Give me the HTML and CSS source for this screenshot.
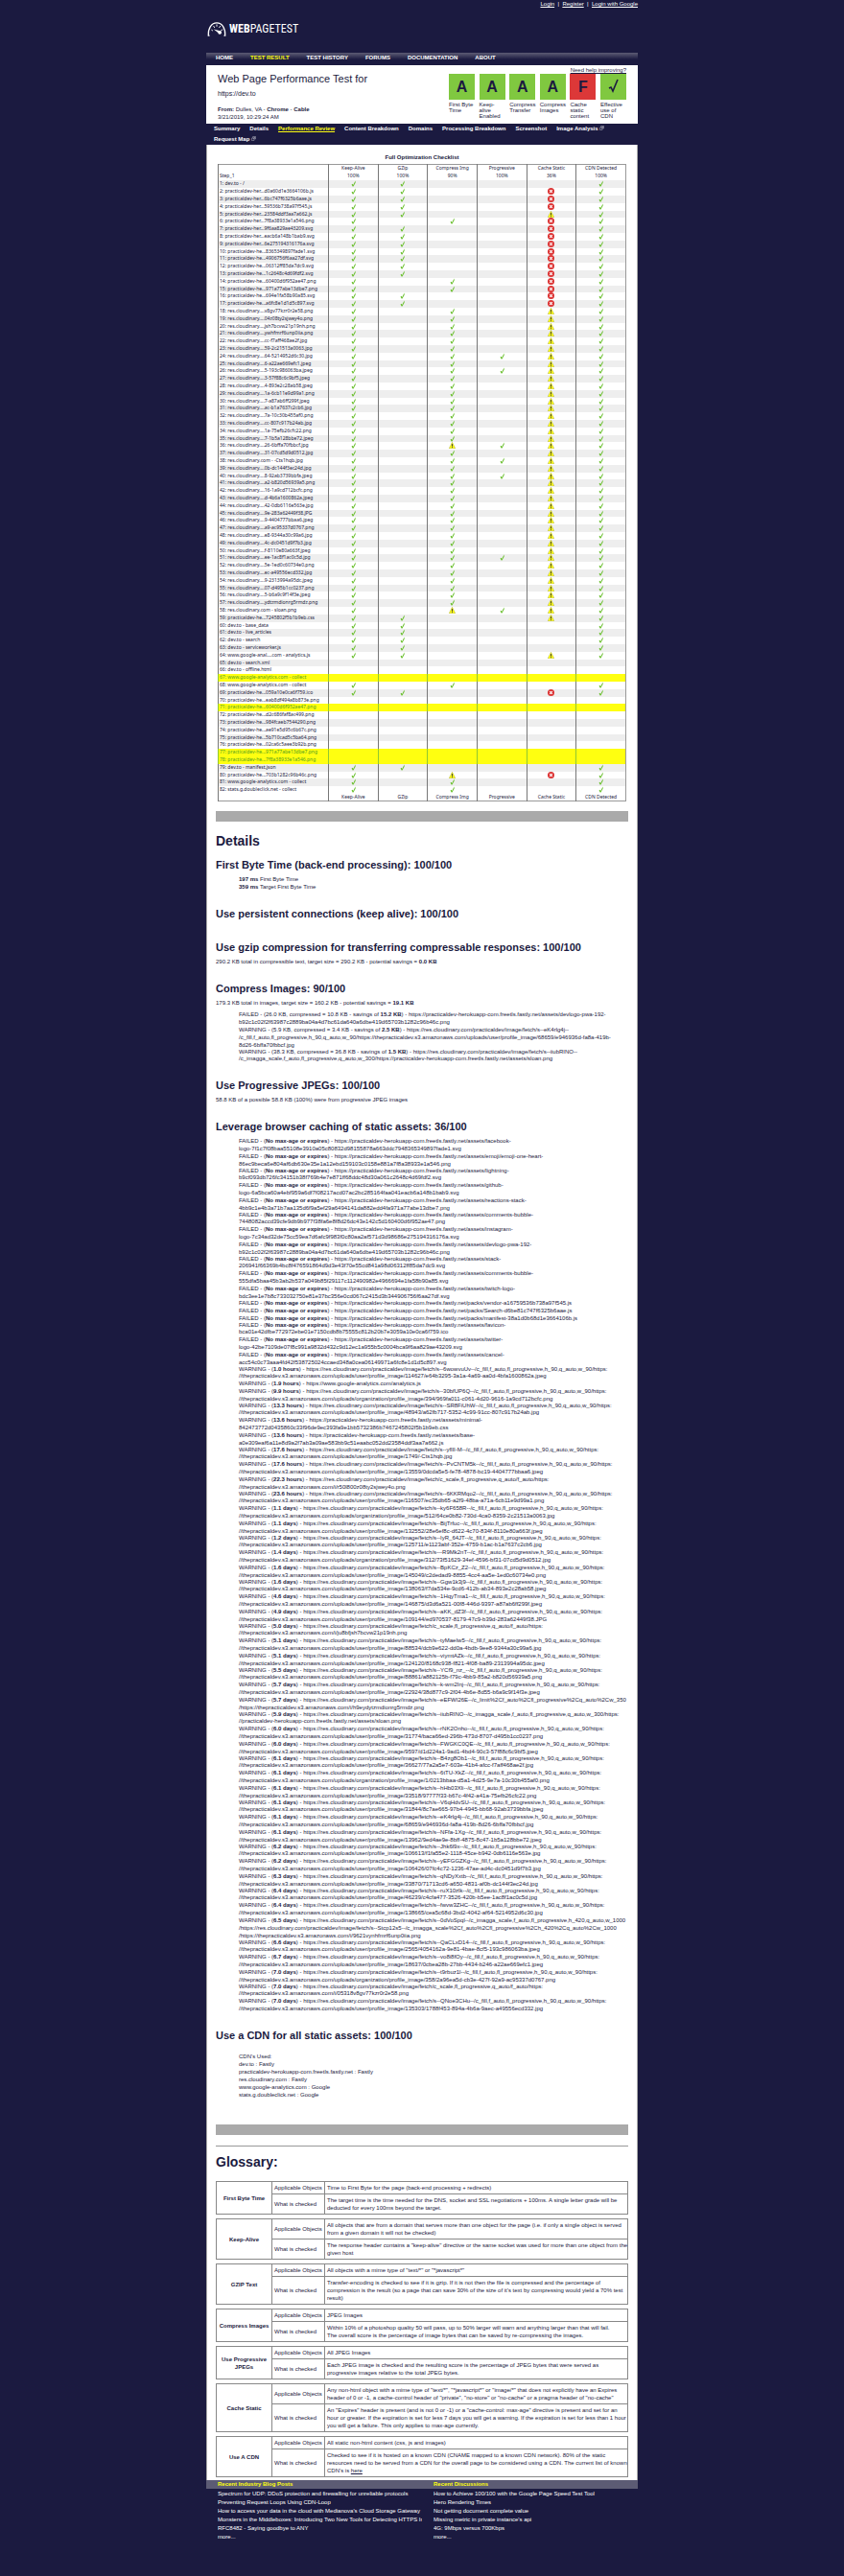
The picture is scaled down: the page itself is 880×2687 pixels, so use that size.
FILE: index.html
```html
<!DOCTYPE html>
<html lang="en">
<head>
<meta charset="utf-8">
<title>WebPagetest - Performance Review</title>
<link rel="stylesheet" href="styles.css">
</head>
<body>
<svg class="symbols" aria-hidden="true">
  <symbol id="ok" viewBox="0 0 12 16"><path d="M1.5 10.5 4 8.5 5.5 11.5 10.5 1 11 5.5 6 15H4z" fill="#6cc030"/></symbol>
  <symbol id="fail" viewBox="0 0 16 16"><circle cx="8" cy="8" r="8" fill="#dc3434"/><path d="m5 5 6 6m0-6-6 6" stroke="#fff" stroke-width="2.4"/></symbol>
  <symbol id="warn" viewBox="0 0 16 16"><path d="M8 .8 15.5 15.5H.5z" fill="#ffff10" stroke="#a0a030"/><path d="M8 5v5.5M8 12v2" stroke="#1b1a40" stroke-width="2"/></symbol>
  <symbol id="ext" viewBox="0 0 12 12"><path d="M1 5h6v6H1zM4 5V1h7v6H7M5 7l4-4M6 3h3v3" fill="none" stroke="#d8d8e0"/></symbol>
</svg>
<div class="page">
  <header>
    <p class="login"><a href="#">Login</a> &nbsp;|&nbsp; <a href="#">Register</a> &nbsp;|&nbsp; <a href="#">Login with Google</a></p>
    <a class="logo" href="#">
      <svg viewBox="0 0 60 48" aria-hidden="true"><g fill="none" stroke="#fff" stroke-width="4"><path d="M6 45H2C1 20 12 3 30 3s29 17 28 42h-4"/><path d="M12 26l5 3M19 13l4 6M30 8v7M42 13l-4 6M50 25l-6 3" stroke-width="3"/></g><path d="M20 24 38 29a6 6 0 1 1-4 6z" fill="#fff"/></svg>
      <span><b>WEB</b>PAGETEST</span>
    </a>
    <nav class="menu">
      <a href="#">HOME</a><a class="current" href="#">TEST RESULT</a><a href="#">TEST HISTORY</a><a href="#">FORUMS</a><a href="#">DOCUMENTATION</a><a href="#">ABOUT</a>
    </nav>
  </header>
  <section class="summary">
    <div>
      <h1>Web Page Performance Test for</h1>
      <a class="url" href="#">https://dev.to</a>
      <p class="from"><b>From:</b> Dulles, VA - <b>Chrome</b> - <b>Cable</b><br>3/21/2019, 10:29:24 AM</p>
    </div>
    <div class="optimization">
      <a class="help" href="#">Need help improving?</a>
      <ul class="grades">
        <li><b>A</b>First Byte Time</li>
        <li><b>A</b>Keep-<br>alive Enabled</li>
        <li><b>A</b>Compress Transfer</li>
        <li><b>A</b>Compress Images</li>
        <li><b class="bad">F</b>Cache static content</li>
        <li><b><svg viewBox="0 0 27 27" role="img" aria-label="Passed"><path d="M9 15l2-1 2 4 5-12" fill="none" stroke="#1b1a40" stroke-width="1.6"/></svg></b>Effective use of CDN</li>
      </ul>
    </div>
  </section>
  <nav class="tabs">
    <a href="#">Summary</a><a href="#">Details</a><a class="current" href="#">Performance Review</a><a href="#">Content Breakdown</a><a href="#">Domains</a><a href="#">Processing Breakdown</a><a href="#">Screenshot</a><a href="#">Image Analysis <svg><use href="#ext"/></svg></a><a href="#">Request Map <svg><use href="#ext"/></svg></a>
  </nav>
  <main>
    <table class="checklist">
      <caption>Full Optimization Checklist</caption>
      <thead>
        <tr><th></th><th>Keep-Alive</th><th>GZip</th><th>Compress Img</th><th>Progressive</th><th>Cache Static</th><th>CDN Detected</th></tr>
        <tr><th>Step_1</th><th>100%</th><th>100%</th><th>90%</th><th>100%</th><th>36%</th><th>100%</th></tr>
      </thead>
      <tbody id="requests"></tbody>
      <tfoot>
        <tr><th></th><th>Keep-Alive</th><th>GZip</th><th>Compress Img</th><th>Progressive</th><th>Cache Static</th><th>CDN Detected</th></tr>
      </tfoot>
    </table>
    <div class="bar"></div>
    <h2>Details</h2>
    <section class="detail">
      <h3>First Byte Time (back-end processing): 100/100</h3>
      <ul class="log"><li><b>197 ms</b> First Byte Time</li><li><b>359 ms</b> Target First Byte Time</li></ul>
    </section>
    <section class="detail">
      <h3>Use persistent connections (keep alive): 100/100</h3>
    </section>
    <section class="detail">
      <h3>Use gzip compression for transferring compressable responses: 100/100</h3>
      <p>290.2 KB total in compressible text, target size = 290.2 KB - potential savings = <b>0.0 KB</b></p>
    </section>
    <section class="detail">
      <h3>Compress Images: 90/100</h3>
      <p>179.3 KB total in images, target size = 160.2 KB - potential savings = <b>19.1 KB</b></p>
      <ul class="log long">
        <li>FAILED - (26.0 KB, compressed = 10.8 KB - savings of <b>15.2 KB</b>) - https://practicaldev-herokuapp-com.freetls.fastly.net/assets/devlogo-pwa-192-<br>b92c1c02f2f63987c2889ba04a4d7bc61da640a6dbe419d65703b1282c96b46c.png</li>
        <li>WARNING - (5.9 KB, compressed = 3.4 KB - savings of <b>2.5 KB</b>) - https://res.cloudinary.com/practicaldev/image/fetch/s--eK4rlg4j--<br>/c_fill,f_auto,fl_progressive,h_90,q_auto,w_90/https://thepracticaldev.s3.amazonaws.com/uploads/user/profile_image/68659/e946936d-fa8a-419b-<br>8d26-6bffa70fbbcf.jpg</li>
        <li>WARNING - (38.3 KB, compressed = 36.8 KB - savings of <b>1.5 KB</b>) - https://res.cloudinary.com/practicaldev/image/fetch/s--iiubRINO--<br>/c_imagga_scale,f_auto,fl_progressive,q_auto,w_300/https://practicaldev-herokuapp-com.freetls.fastly.net/assets/sloan.png</li>
      </ul>
    </section>
    <section class="detail">
      <h3>Use Progressive JPEGs: 100/100</h3>
      <p>58.8 KB of a possible 58.8 KB (100%) were from progressive JPEG images</p>
    </section>
    <section class="detail">
      <h3>Leverage browser caching of static assets: 36/100</h3>
      <ul class="log long" id="caching"></ul>
    </section>
    <section class="detail cdn">
      <h3>Use a CDN for all static assets: 100/100</h3>
      <ul class="log"><li>CDN's Used:</li><li>dev.to : Fastly</li><li>practicaldev-herokuapp-com.freetls.fastly.net : Fastly</li><li>res.cloudinary.com : Fastly</li><li>www.google-analytics.com : Google</li><li>stats.g.doubleclick.net : Google</li></ul>
    </section>
    <div class="bar"></div>
    <hr>
    <h2>Glossary:</h2>
    <table class="glossary">
      <tbody>
        <tr><th rowspan="2">First Byte Time</th><td>Applicable Objects</td><td>Time to First Byte for the page (back-end processing + redirects)</td></tr>
        <tr><td>What is checked</td><td>The target time is the time needed for the DNS, socket and SSL negotiations + 100ms. A single letter grade will be<br>deducted for every 100ms beyond the target.</td></tr>
        <tr class="space"><td colspan="3"></td></tr>
        <tr><th rowspan="2">Keep-Alive</th><td>Applicable Objects</td><td>All objects that are from a domain that serves more than one object for the page (i.e. if only a single object is served<br>from a given domain it will not be checked)</td></tr>
        <tr><td>What is checked</td><td>The response header contains a "keep-alive" directive or the same socket was used for more than one object from the<br>given host</td></tr>
        <tr class="space"><td colspan="3"></td></tr>
        <tr><th rowspan="2">GZIP Text</th><td>Applicable Objects</td><td>All objects with a mime type of "text/*" or "*javascript*"</td></tr>
        <tr><td>What is checked</td><td>Transfer-encoding is checked to see if it is gzip. If it is not then the file is compressed and the percentage of<br>compression is the result (so a page that can save 30% of the size of it's text by compressing would yield a 70% test<br>result)</td></tr>
        <tr class="space"><td colspan="3"></td></tr>
        <tr><th rowspan="2">Compress Images</th><td>Applicable Objects</td><td>JPEG Images</td></tr>
        <tr><td>What is checked</td><td>Within 10% of a photoshop quality 50 will pass, up to 50% larger will warn and anything larger than that will fail.<br>The overall score is the percentage of image bytes that can be saved by re-compressing the images.</td></tr>
        <tr class="space"><td colspan="3"></td></tr>
        <tr><th rowspan="2">Use Progressive<br>JPEGs</th><td>Applicable Objects</td><td>All JPEG Images</td></tr>
        <tr><td>What is checked</td><td>Each JPEG image is checked and the resulting score is the percentage of JPEG bytes that were served as<br>progressive images relative to the total JPEG bytes.</td></tr>
        <tr class="space"><td colspan="3"></td></tr>
        <tr><th rowspan="2">Cache Static</th><td>Applicable Objects</td><td>Any non-html object with a mime type of "text/*", "*javascript*" or "image/*" that does not explicitly have an Expires<br>header of 0 or -1, a cache-control header of "private", "no-store" or "no-cache" or a pragma header of "no-cache"</td></tr>
        <tr><td>What is checked</td><td>An "Expires" header is present (and is not 0 or -1) or a "cache-control: max-age" directive is present and set for an<br>hour or greater. If the expiration is set for less 7 days you will get a warning. If the expiration is set for less than 1 hour<br>you will get a failure. This only applies to max-age currently.</td></tr>
        <tr class="space"><td colspan="3"></td></tr>
        <tr><th rowspan="2">Use A CDN</th><td>Applicable Objects</td><td>All static non-html content (css, js and images)</td></tr>
        <tr><td>What is checked</td><td>Checked to see if it is hosted on a known CDN (CNAME mapped to a known CDN network). 80% of the static<br>resources need to be served from a CDN for the overall page to be considered using a CDN. The current list of known<br>CDN's is <a href="#">here</a></td></tr>
      </tbody>
    </table>
  </main>
  <footer>
    <section>
      <h4>Recent Industry Blog Posts</h4>
      <ul><li><a href="#">Spectrum for UDP: DDoS protection and firewalling for unreliable protocols</a></li><li><a href="#">Preventing Request Loops Using CDN-Loop</a></li><li><a href="#">How to access your data in the cloud with Medianova's Cloud Storage Gateway</a></li><li><a href="#">Monsters in the Middleboxes: Introducing Two New Tools for Detecting HTTPS In</a></li><li><a href="#">RFC8482 - Saying goodbye to ANY</a></li><li><a href="#">more...</a></li></ul>
    </section>
    <section>
      <h4>Recent Discussions</h4>
      <ul><li><a href="#">How to Achieve 100/100 with the Google Page Speed Test Tool</a></li><li><a href="#">Hero Rendering Times</a></li><li><a href="#">Not getting document complete value</a></li><li><a href="#">Missing metric in private instance's api</a></li><li><a href="#">4G: 9Mbps versus 700Kbps</a></li><li><a href="#">more...</a></li></ul>
    </section>
  </footer>
</div>
<script src="script.js"></script>
</body>
</html>
```

FILE: styles.css
```css
* { box-sizing: border-box; }
body {
  margin: 0;
  background: #1b1a40;
  color: #1b1a40;
  font: 6px/8px "Liberation Sans", Arial, sans-serif;
}
h1, h2, h3, h4, p, ul { margin: 0; padding: 0; }
ul { list-style: none; }
a { color: inherit; text-decoration: none; }
.symbols { display: none; }
.page { max-width: 450px; margin: 0 auto; }

.login { color: #fff; text-align: right; }
.login a { text-decoration: underline; }
.logo { display: flex; align-items: center; gap: 3px; height: 16px; margin: 14px 0 17px; padding-left: 1px; color: #fff; }
.logo svg { width: 20px; height: 15px; }
.logo span { font: 12px/16px "Roboto Condensed", "Liberation Sans Narrow", "Liberation Sans", sans-serif; }
.menu { display: flex; gap: 18px; height: 13px; padding: 1px 10px 0; background: linear-gradient(#5c5b74, #1b1a40 7px); color: #fff; font-weight: bold; }
.current { color: #ffff10; }

.summary { display: flex; justify-content: space-between; height: 61px; padding: 1px 12px 0; background: #fff; }
.summary h1 { margin-top: 5px; font-size: 11px; line-height: 16px; font-weight: normal; }
.url { display: block; margin: 4px 0 8px; font-size: 7px; }
.optimization { width: 185px; text-align: right; }
.help { text-decoration: underline; }
.grades { display: flex; justify-content: space-between; line-height: 6px; text-align: left; }
.grades li { width: 27px; }
.grades b { display: block; height: 27px; margin-bottom: 2px; background: #80c840; font-size: 16px; line-height: 27px; text-align: center; }
.grades .bad { background: #dc3838; }
.grades svg { display: block; width: 27px; height: 27px; }
.tabs { display: flex; flex-wrap: wrap; column-gap: 10px; padding-left: 8px; color: #fff; font-weight: bold; line-height: 11px; }
.tabs .current { text-decoration: underline; }
.tabs svg { width: 5px; height: 5px; }

main { padding: 9px 9px 3px; border-left: 1px solid #aaa; border-right: 1px solid #aaa; background: #fff; }
table { border-collapse: collapse; table-layout: fixed; }
.checklist { width: calc(100% - 4px); margin: 0 2px; border: 1px solid #999; font: 5px/7px "Noto Sans", sans-serif; }
.checklist caption { padding-bottom: 2px; font: bold 6px/9px "Liberation Sans", sans-serif; }
.checklist th, .checklist td { height: 8px; padding: 0; border-left: 1px solid #777; font-weight: normal; text-align: center; white-space: nowrap; }
.checklist th:first-child, .checklist td:first-child { width: 115px; padding-left: 1px; text-align: left; }
.checklist tbody tr:nth-child(odd) { background: #eee; }
.checklist tbody tr:nth-child(5n) td { height: 7px; }
.checklist tbody tr.error { background: #ffff10; color: #50a020; }
.checklist .error td { border-color: #90c830; }
.checklist svg { display: block; width: 7px; height: 7px; margin: 0 auto; }

.bar { height: 11px; margin-top: 10px; background: #aaa; }
h2 { margin-top: 12px; font-size: 14px; line-height: 16px; }
h3 { font-size: 11px; line-height: 12px; margin-bottom: 5px; }
.detail { display: flow-root; margin-top: 11px; }
.detail + .detail { margin-top: 18px; }
.detail p + .log { margin-top: 4px; }
.log { padding-left: 24px; white-space: nowrap; }
.log.long li:nth-child(3n) { line-height: 7px; }
.cdn .log { margin-top: 12px; }
.cdn + .bar { margin-top: 27px; }
hr { height: 1px; margin: 11px 0 0; border: 0; background: #999; }
hr + h2 { margin-top: 8px; }

.glossary { width: 100%; margin-top: 12px; }
.glossary th, .glossary td { padding: 2px; border: 1px solid #888; text-align: left; white-space: nowrap; }
.glossary th { width: 58px; text-align: center; }
.glossary td:nth-last-child(2) { width: 55px; }
.glossary .space td { height: 5px; padding: 0; border-left: 0; border-right: 0; }
.glossary a { text-decoration: underline; }

footer { display: grid; grid-template-columns: 1fr 1fr; background: linear-gradient(#5c5b74, #5c5b74) top / 100% 9px no-repeat; color: #fff; line-height: 9px; }
footer section { min-width: 0; padding-left: 12px; }
footer li { overflow: hidden; white-space: nowrap; }
h4 { margin-bottom: 1px; color: #ffff10; font-size: 6px; line-height: 9px; }
```

FILE: script.js
```js
// One request per line: name | result codes in column order.
// o = passed, x = failed, w = warning, - = not applicable; "error" marks a failed request.
const requests = `dev.to - /|oo---o
practicaldev-her...d0a60d1e3664106b.js|oo--xo
practicaldev-her...6bc747f6325b6aae.js|oo--xo
practicaldev-her...59536b738a97f545.js|oo--xo
practicaldev-her...23584ddf3aa7a662.js|oo--wo
practicaldev-her...7f8a38933e1a546.png|o-o-xo
practicaldev-her...9f6aa829ae43209.svg|oo--xo
practicaldev-her...eacb6a148b1bab9.svg|oo--xo
practicaldev-her...6e275194316176a.svg|oo--xo
practicaldev-he...8365349897fade1.svg|oo--xo
practicaldev-he...4906756f6aa27df.svg|oo--xo
practicaldev-he...06312ff85da7dc9.svg|oo--xo
practicaldev-he...1c2648c4d69fdf2.svg|oo--xo
practicaldev-he...60400d6f952ae47.png|o-o-xo
practicaldev-he...971a77abe13dbe7.png|o-o-xo
practicaldev-he...694e1fa58b90a85.svg|oo--xo
practicaldev-he...a6fc8e1d1d5c897.svg|oo--xo
res.cloudinary....v8gv77kzr0r2e58.png|o-o-wo
res.cloudinary....04z08ty2sjwey4o.png|o-o-wo
res.cloudinary....jsh7bcvw21p19nh.png|o-o-wo
res.cloudinary....ywhfmrf6unp0iia.png|o-o-wo
res.cloudinary....cc-f7aff468ae2f.jpg|o-o-wo
res.cloudinary....59-2c21513a0063.jpg|o-o-wo
res.cloudinary....64-5214952d6c30.jpg|o-oowo
res.cloudinary....6-a22ae669efc1.jpeg|o-o-wo
res.cloudinary....5-193c986063ba.jpeg|o-oowo
res.cloudinary....3-57f88c6c9bf5.jpeg|o-o-wo
res.cloudinary....4-893e2c28ab58.jpeg|o-o-wo
res.cloudinary....1a-6cb11e9d99a1.png|o-o-wo
res.cloudinary....7-a87ab6ff299f.jpeg|o-o-wo
res.cloudinary....ac-b1a7637c2cb6.jpg|o-o-wo
res.cloudinary....7a-10c30b455af0.png|o-o-wo
res.cloudinary....cc-807c917b24ab.jpg|o-o-wo
res.cloudinary....1a-75efb26cfc22.png|o-o-wo
res.cloudinary....7-1b5a128bbe72.jpeg|o-o-wo
res.cloudinary....26-6bffa70fbbcf.jpg|o-wowo
res.cloudinary....31-07cd5d9d0512.jpg|o-o-wo
res.cloudinary.com - -Cts1hqb.jpg|o-oowo
res.cloudinary....0b-dc144f3ec24d.jpg|o-o-wo
res.cloudinary....8-92ab3739bbfa.jpeg|o-oowo
res.cloudinary....a2-b820d56939a5.png|o-o-wo
res.cloudinary....16-1a9cd712bcfc.png|o-o-wo
res.cloudinary....d-4b6a1600862a.jpeg|o-o-wo
res.cloudinary....42-0db6116e563e.jpg|o-o-wo
res.cloudinary....9e-283a62449f38.JPG|o-o-wo
res.cloudinary....9-4404777bbaa6.jpeg|o-o-wo
res.cloudinary....a9-ac95337d0767.png|o-o-wo
res.cloudinary....e8-9344a30c99a6.jpg|o-o-wo
res.cloudinary....4c-dc0451d9f7b3.jpg|o-o-wo
res.cloudinary....f-8110e80a663f.jpeg|o-o-wo
res.cloudinary....ee-1ac8f1ac0c5d.jpg|o-oowo
res.cloudinary....5e-1ed0c60734e0.png|o-o-wo
res.cloudinary....ec-a49556ecd332.jpg|o-o-wo
res.cloudinary....9-2313994a95dc.jpeg|o-o-wo
res.cloudinary....07-d495b1cc0237.png|o-o-wo
res.cloudinary....5-b6a9c9f14f3e.jpeg|o-o-wo
res.cloudinary....ydtzmdionrg5rmdz.png|o-o-wo
res.cloudinary.com - sloan.png|o-wowo
practicaldev-he...7245802f5b1b9eb.css|oo--wo
dev.to - base_data|oo---o
dev.to - live_articles|oo---o
dev.to - search|oo---o
dev.to - serviceworker.js|oo---o
www.google-anal....com - analytics.js|oo--wo
dev.to - search.xml|------
dev.to - offline.html|------
www.google-analytics.com - collect|error
www.google-analytics.com - collect|o-o--o
practicaldev-he...059a10e0ca6f759.ico|oo--xo
practicaldev-he...eab8df494a8b873e.png|------
practicaldev-he...60400d6f952ae47.png|error
practicaldev-he...d2c686faf8ac499.png|------
practicaldev-he...984fcaeb7544290.png|------
practicaldev-he...ae91e5d95c6b67c.png|------
practicaldev-he...5b710cad5c5ba64.png|------
practicaldev-he...02ca6c5aee3b92b.png|------
practicaldev-he...971a77abe13dbe7.png|error
practicaldev-he...7f8a38933e1a546.png|error
dev.to - manifest.json|oo---o
practicaldev-he...703b1282c96b46c.png|o-w-xo
www.google-analytics.com - collect|o-o--o
stats.g.doubleclick.net - collect|o-o--o`.split("\n");

const icons = { o: ["ok", "Passed"], x: ["fail", "Failed"], w: ["warn", "Warning"] };
document.getElementById("requests").innerHTML = requests.map((line, i) => {
  const [name, result] = line.split("|");
  const failed = result === "error";
  const cells = [...(failed ? "------" : result)].map(c => icons[c]
    ? `<td><svg role="img" aria-label="${icons[c][1]}"><use href="#${icons[c][0]}"/></svg></td>` : "<td></td>");
  return `<tr${failed ? ' class="error"' : ""}><td>${i + 1}: ${name}</td>${cells.join("")}</tr>`;
}).join("");

// Assets with no cache lifetime; a space marks the line break.
const noExpiry = `assets/facebook- logo-7f1c7f08baa55108e3910a05c80832d98155878a663ddc7948365349897fade1.svg
assets/emoji/emoji-one-heart- 86ec9beca6e804af6db630e35e1a12ebd159103c0158e881a7f8a38933e1a546.png
assets/lightning- b9cf093db726fc34151b38f769b4e7e871ff68ddc48d30a061c2648c4d69fdf2.svg
assets/github- logo-6a5bca60a4ebf959a6df7f08217acd07ac2bc285164faa041eacb6a148b1bab9.svg
assets/reactions-stack- 4bb9c1e4b3a71b7aa135d6f9a5ef29a6494141da882edd4fa971a77abe13dbe7.png
assets/comments-bubble- 7448082accd39cfe9db9b977f38fa6e8f8d26dc43e142c5d160400d6f952ae47.png
assets/instagram- logo-7c34ad32de75cc59ea7d6afc9f983f0c80aa2af571d3d98686e275194316176a.svg
assets/devlogo-pwa-192- b92c1c02f2f63987c2889ba04a4d7bc61da640a6dbe419d65703b1282c96b46c.png
assets/stack- 206941f66369b4bc8f476591864d9d3e43f70e55cd841a98d06312ff85da7dc9.svg
assets/comments-bubble- 555dfa5baa45b3ab2b537a049b85f29117c112490982e4966694e1fa58b90a85.svg
assets/twitch-logo- bdc3ee1e7b8c733032750e81e37bc356e0cd067c2415d3b344906756f6aa27df.svg
packs/vendor-a16759536b738a97f545.js
packs/Search-d6be81c747f6325b6aae.js
packs/manifest-38a1d0b68d1e3664106b.js
assets/favicon- bca01e42dfbe772972ebe01e7150cdb8b75555c812b20b7e3059a10e0ca6f759.ico
assets/twitter- logo-42be7109de07f8c991a9832d432c9d12ec1a955b5c0004bca9f6aa829ae43209.svg
assets/cancel- acc54c0c73aaa4fd42f538725024ccaed348a0cea06149971a6fc8e1d1d5c897.svg`.split("\n");

// Short-lived assets: lifetime | fetch signature | path. A leading "=" gives the whole address.
const shortLived = `1.0 hours|6wowvuUv|user/profile_image/114627/e64b3295-3a1a-4a69-aa0d-4bfa1600862a.jpeg
1.9 hours|=https://www.google-analytics.com/analytics.js
9.9 hours|30bfUP6Q|organization/profile_image/394/969fa011-c061-4d20-9616-1a9cd712bcfc.png
13.3 hours|SR8FiUhW|user/profile_image/48943/a62fb717-5352-4c99-91cc-807c917b24ab.jpg
13.6 hours|=https://practicaldev-herokuapp-com.freetls.fastly.net/assets/minimal- 842473772d0435860c33f96de9ec393fa9e1bb5732386b7467245802f5b1b9eb.css
13.6 hours|=https://practicaldev-herokuapp-com.freetls.fastly.net/assets/base- a0e309eaf6a11e8d9a2f7ab3a09ae583bb9c51eaabc052dd23584ddf3aa7a662.js
17.6 hours|yfIlI-M|user/profile_image/1749/-Cts1hqb.jpg
17.6 hours|PvCNTM5k|user/profile_image/13559/0dcda5e5-fe78-4878-bc19-4404777bbaa6.jpeg
22.3 hours|=https://res.cloudinary.com/practicaldev/image/fetch/c_scale,fl_progressive,q_auto/f_auto/https: //thepracticaldev.s3.amazonaws.com/i/r50l800z08ty2sjwey4o.png
23.6 hours|6KKRMqo2|user/profile_image/116507/ec35db65-a2f9-48ba-a71a-6cb11e9d99a1.png
1.1 days|ky6F658R|organization/profile_image/512/64ce0b82-730d-4ca0-8359-2c21513a0063.jpg
1.1 days|BijTrfuc|user/profile_image/132552/28e6ef8c-d622-4c70-834f-8110e80a663f.jpeg
1.2 days|IyR_64JT|user/profile_image/125711/e1123abf-352e-4759-b1ac-b1a7637c2cb6.jpg
1.4 days|-R9Mk2nT|organization/profile_image/312/73f51629-34ef-4596-bf31-07cd5d9d0512.jpg
1.6 days|BpKCz_Z2|user/profile_image/145049/c2dedad9-8855-4cc4-aa5e-1ed0c60734e0.png
1.6 days|Ggw1k3j9|user/profile_image/138063/f7da534e-9cd6-412b-ab34-893e2c28ab58.jpeg
4.6 days|1HqyTma1|user/profile_image/146875/d3d6a521-00f8-446d-9397-a87ab6ff299f.jpeg
4.9 days|aKK_dZ3f|user/profile_image/109144/ed970537-8179-47c9-b39d-283a62449f38.JPG
5.0 days|=https://res.cloudinary.com/practicaldev/image/fetch/c_scale,fl_progressive,q_auto/f_auto/https: //thepracticaldev.s3.amazonaws.com/i/ju8bfjsh7bcvw21p19nh.png
5.1 days|tyMaeIw5|user/profile_image/88534/dcb9e622-dd0a-4bdb-9ee8-9344a30c99a6.jpg
5.1 days|viymtAZk|user/profile_image/124120/8168c938-f821-4f08-ba89-2313994a95dc.jpeg
5.5 days|YCf9_nz_|user/profile_image/88861/a882125b-f79c-4bb9-85a2-b820d56939a5.png
5.7 days|k-wm2Inj|user/profile_image/22924/38d877c9-2f04-4b6e-8d55-b6a9c9f14f3e.jpeg
5.7 days|=https://res.cloudinary.com/practicaldev/image/fetch/s--eEFWI26E--/c_limit%2Cf_auto%2Cfl_progressive%2Cq_auto%2Cw_350 /https://thepracticaldev.s3.amazonaws.com/i/h9eydytzmdionrg5rmdz.png
5.9 days|=https://res.cloudinary.com/practicaldev/image/fetch/s--iiubRINO--/c_imagga_scale,f_auto,fl_progressive,q_auto,w_300/https: //practicaldev-herokuapp-com.freetls.fastly.net/assets/sloan.png
6.0 days|rNK2Onho|user/profile_image/31774/baca66ed-296b-473d-8707-d495b1cc0237.png
6.0 days|FWGKC0QE|user/profile_image/9597/d1d224a1-9ad1-4bd4-90c3-57f88c6c9bf5.jpeg
6.1 days|B4zg8Ob1|user/profile_image/36627/77a2a5e7-603e-41b4-afcc-f7aff468ae2f.jpg
6.1 days|6tTU-XkZ|organization/profile_image/1/0213bbaa-d5a1-4d25-9e7a-10c30b455af0.png
6.1 days|hHb03Xli|user/profile_image/33518/97777f33-b67c-4f42-a41a-75efb26cfc22.png
6.1 days|V6qHdvSU|user/profile_image/31844/8c7ae665-97b4-4945-bb68-92ab3739bbfa.jpeg
6.1 days|eK4rlg4j|user/profile_image/68659/e946936d-fa8a-419b-8d26-6bffa70fbbcf.jpg
6.1 days|NFfa-1Xg|user/profile_image/13962/9ed4ae9e-8bff-4875-8c47-1b5a128bbe72.jpeg
6.2 days|Jhk6l9x|user/profile_image/106613/f1fa55e2-1118-45ce-b942-0db6116e563e.jpg
6.2 days|yEFGGZKg|user/profile_image/106426/07fc4c72-1236-47ae-ad4c-dc0451d9f7b3.jpg
6.3 days|qNDyXxtb|user/profile_image/33870/71713cd6-a650-4831-af0b-dc144f3ec24d.jpg
6.4 days|ruX10zlk|user/profile_image/46239/c4cfa477-3526-420b-b5ee-1ac8f1ac0c5d.jpg
6.4 days|fwvw3ZHC|user/profile_image/138665/cea5c68d-3bd2-4042-af64-5214952d6c30.jpg
6.5 days|=https://res.cloudinary.com/practicaldev/image/fetch/s--0dVoSpql--/c_imagga_scale,f_auto,fl_progressive,h_420,q_auto,w_1000 /https://res.cloudinary.com/practicaldev/image/fetch/s--Stcp12s5--/c_imagga_scale%2Cf_auto%2Cfl_progressive%2Ch_420%2Cq_auto%2Cw_1000 /https://thepracticaldev.s3.amazonaws.com/i/9621vynhfmrf6unp0iia.png
6.6 days|QaCLxD14|user/profile_image/2565/4054162a-9e81-4bae-8cf5-193c986063ba.jpeg
6.7 days|vo8i8fOy|user/profile_image/18637/0cbea28b-27bb-4434-b246-a22ae669efc1.jpeg
7.0 days|t9rbuz1l|organization/profile_image/358/2a96ea5d-cb3e-427f-92a9-ac95337d0767.png
7.0 days|=https://res.cloudinary.com/practicaldev/image/fetch/c_scale,fl_progressive,q_auto/f_auto/https: //thepracticaldev.s3.amazonaws.com/i/05318v8gv77kzr0r2e58.png
7.0 days|QNoe3CHu|user/profile_image/135303/1788f453-894a-4b6a-9aec-a49556ecd332.jpg`.split("\n");

const failures = noExpiry.map(path =>
  `<li>FAILED - (<b>No max-age or expires</b>) - https://practicaldev-herokuapp-com.freetls.fastly.net/${path.replace(/ /g, "<br>")}</li>`);
const warnings = shortLived.map(line => {
  const [age, source, path] = line.split("|");
  const address = path
    ? `https://res.cloudinary.com/practicaldev/image/fetch/s--${source}--/c_fill,f_auto,fl_progressive,h_90,q_auto,w_90/https:<br>//thepracticaldev.s3.amazonaws.com/uploads/${path}`
    : source.slice(1).replace(/ /g, "<br>");
  return `<li>WARNING - (<b>${age}</b>) - ${address}</li>`;
});
document.getElementById("caching").innerHTML = failures.concat(warnings).join("");
```
